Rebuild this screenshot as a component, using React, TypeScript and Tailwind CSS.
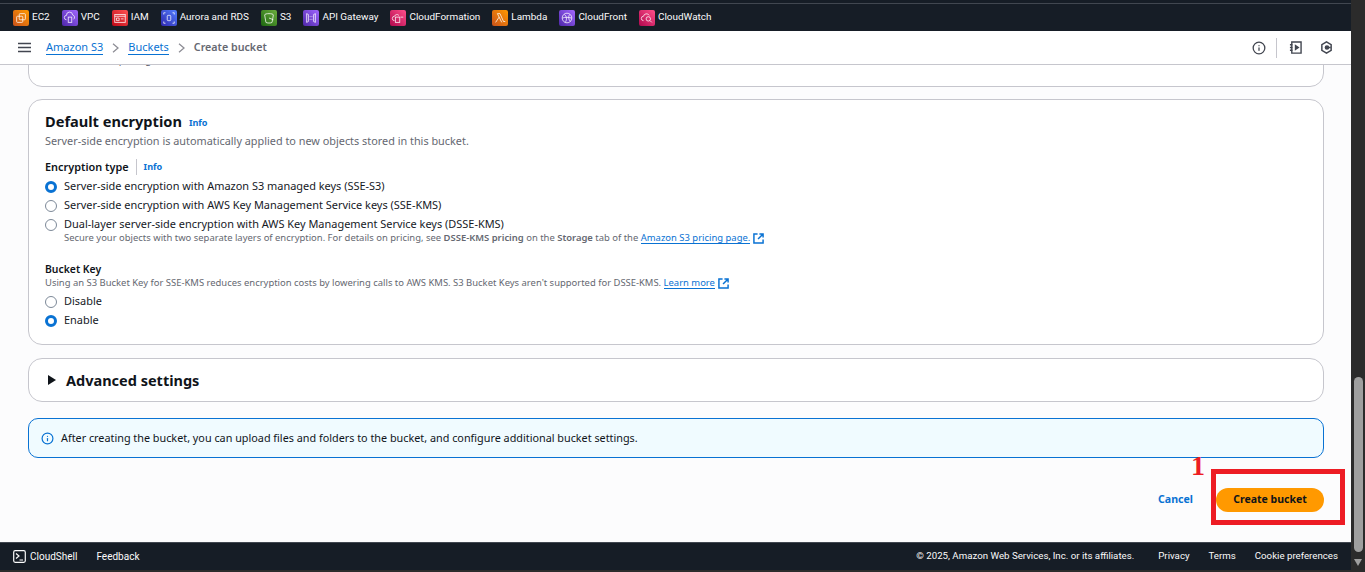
import { Info as InfoIcon } from 'lucide-react'

const sans = "font-['Noto_Sans',sans-serif]"
const bar = "font-['Roboto',sans-serif]"

function Svc({ from, to, label, children }: { from: string; to: string; label: string; children: React.ReactNode }) {
  return (
    <div className="flex items-center gap-[3px]">
      <span
        className="flex h-4 w-4 items-center justify-center rounded-[2px]"
        style={{ background: `linear-gradient(to top right, ${from}, ${to})` }}
      >
        <svg viewBox="0 0 16 16" className="h-[14px] w-[14px]" fill="none" stroke="#fff" strokeWidth="1" strokeOpacity="0.85">
          {children}
        </svg>
      </span>
      <span className={`pb-[2px] text-[9.93px] leading-none text-[#fbfbfb] ${bar}`}>{label}</span>
    </div>
  )
}

function Radio({ checked, children }: { checked?: boolean; children: React.ReactNode }) {
  return (
    <div className="flex h-[19px] items-center gap-[7px]">
      {checked ? (
        <span className="h-3 w-3 shrink-0 rounded-full border-[3.5px] border-[#0972d3] bg-white" />
      ) : (
        <span className="h-3 w-3 shrink-0 rounded-full border border-[#7d8998] bg-white" />
      )}
      <span className="text-[10.95px] leading-none text-[#16191f]">{children}</span>
    </div>
  )
}

function ExtLink({ children }: { children: React.ReactNode }) {
  return (
    <span className="inline-flex items-center gap-[3px] text-[#0972d3]">
      <span className="border-b border-[#0972d3] leading-[11px]">{children}</span>
      <svg viewBox="0 0 12 12" className="h-[11px] w-[11px]" fill="none" stroke="#0972d3" strokeWidth="1.6">
        <path d="M5 1H1v10h10V7" />
        <path d="M7 1h4v4M11 1 5.5 6.5" />
      </svg>
    </span>
  )
}

export default function App() {
  return (
    <div className={`flex h-[572px] w-[1365px] overflow-hidden bg-[#2b2b2b] ${sans}`}>
      <div className="flex w-[1351px] flex-col">
        <div className="h-[3px] bg-[#161d26]" />
        <div className="flex h-[28px] items-center gap-[12px] border-t border-[#414750] bg-[#161d26] pl-[13px]">
          <Svc from="#c8511b" to="#ff9900" label="EC2">
            <rect x="6" y="3" width="7" height="7" rx="1" />
            <rect x="3" y="6" width="7" height="7" rx="1" />
          </Svc>
          <Svc from="#4d27a8" to="#a166ff" label="VPC">
            <path d="M4 10a2.500 2.500 0 0 1 0-5 3.500 3.500 0 0 1 7-.5 2.800 2.800 0 0 1 1 5" />
            <rect x="6" y="7" width="4" height="6" />
          </Svc>
          <Svc from="#bd0816" to="#ff5252" label="IAM">
            <rect x="2" y="4" width="12" height="9" />
            <path d="M2 6h12M4 8h3v3H4zM9 9h3" />
          </Svc>
          <Svc from="#2e27ad" to="#527fff" label="Aurora and RDS">
            <rect x="6" y="5" width="4" height="6" rx="1" />
            <path d="M2 2h2M2 2v2M14 2h-2M14 2v2M2 14h2M2 14v-2M14 14h-2M14 14v-2" />
          </Svc>
          <Svc from="#1b660f" to="#6cae3e" label="S3">
            <path d="M3 4.500c0-2 10-2 10 0l-1.500 8.500c-.5 1-6.500 1-7 0z" />
            <path d="M8 8l5 2" />
          </Svc>
          <Svc from="#4d27a8" to="#a166ff" label="API Gateway">
            <path d="M3 3v10l2-1V4zM13 3v10l-2-1V4z" />
            <path d="M7 6v1M9 6v1M7 9v1M9 9v1" />
          </Svc>
          <Svc from="#b0084d" to="#ff4f8b" label="CloudFormation">
            <path d="M9 5a3 3 0 0 0-5 1 2.500 2.500 0 0 0 0 5" />
            <rect x="5" y="7" width="5" height="6" />
            <path d="M11 7h3" />
          </Svc>
          <Svc from="#c8511b" to="#ff9900" label="Lambda">
            <path d="M3 13l4-6-2-4h3l4 9h2M7 7l3 6" />
          </Svc>
          <Svc from="#4d27a8" to="#a166ff" label="CloudFront">
            <circle cx="8" cy="8" r="5.500" />
            <path d="M5 4c3 2 3 6 1 9M11 4c-2 3-1 6 1 8M3 8c3-1 6-1 10 0" />
          </Svc>
          <Svc from="#b0084d" to="#ff4f8b" label="CloudWatch">
            <path d="M4 11a2.500 2.500 0 0 1 0-5 3.500 3.500 0 0 1 6.500-1" />
            <circle cx="9.500" cy="9" r="2.500" />
            <path d="m11.500 11 2 2" />
          </Svc>
        </div>

        <div className="flex h-[34px] items-center border-b border-[#c6c6cd] bg-white pl-[18px] pr-[18px]">
          <svg viewBox="0 0 13 11" className="h-[11px] w-[13px]" fill="none" stroke="#424650" strokeWidth="1.700">
            <path d="M0 1.500h13M0 5.500h13M0 9.500h13" />
          </svg>
          <span className="ml-[15px] border-b border-[#0972d3] text-[11px] leading-[14px] text-[#0972d3]">Amazon S3</span>
          <svg viewBox="0 0 8 12" className="mx-[9px] h-[10px] w-[7px]" fill="none" stroke="#8c8c94" strokeWidth="1.500">
            <path d="m1 1 6 5-6 5" />
          </svg>
          <span className="border-b border-[#0972d3] text-[11px] leading-[14px] text-[#0972d3]">Buckets</span>
          <svg viewBox="0 0 8 12" className="mx-[9px] h-[10px] w-[7px]" fill="none" stroke="#8c8c94" strokeWidth="1.500">
            <path d="m1 1 6 5-6 5" />
          </svg>
          <span className="text-[10.7px] font-semibold text-[#656871]">Create bucket</span>
          <div className="ml-auto flex items-center">
            <InfoIcon className="h-[14px] w-[14px] text-[#424650]" strokeWidth={2.200} />
            <span className="ml-[10px] mr-[12px] h-5 w-px bg-[#c6c6cd]" />
            <svg viewBox="0 0 14 14" className="h-[13px] w-[13px]" fill="none" stroke="#424650" strokeWidth="1.500">
              <path d="M3 1h10v12H3zM1 4h3M1 7h3M1 10h3" />
              <path d="m7 5 3 2-3 2z" fill="#424650" />
            </svg>
            <svg viewBox="0 0 14 14" className="ml-[18px] h-[13px] w-[13px]" fill="none" stroke="#424650" strokeWidth="1.600">
              <path d="M7 1l5 3v6l-5 3-5-3V4z" />
              <circle cx="7.500" cy="7" r="1.700" fill="#424650" />
              <path d="M7.500 7h4" />
            </svg>
          </div>
        </div>

        <div className="flex min-h-0 flex-1 flex-col bg-[#fcfcfd] pl-[28px] pr-[27px]">
          <div className="h-[22px] shrink-0 overflow-hidden">
            <div className="-mt-[40px] h-[62px] rounded-b-[14px] border border-[#c6c6cd] bg-white px-4 pt-[24px] text-[10px] leading-[18px] text-[#656871]">
              Recommended pricing
            </div>
          </div>

          <div className="mt-[12px] h-[246px] shrink-0 rounded-[14px] border border-[#c6c6cd] bg-white px-4 pt-[11px]">
            <div className="flex items-center gap-[7px]">
              <h2 className="text-[14.6px] font-bold leading-[20px] text-[#0f141a]">Default encryption</h2>
              <span className="pt-[3px] text-[9.1px] font-bold text-[#0972d3]">Info</span>
            </div>
            <p className="mt-[2px] text-[10.87px] leading-[16px] text-[#656871]">
              Server-side encryption is automatically applied to new objects stored in this bucket.
            </p>
            <div className="mt-[10px] flex h-4 items-center">
              <span className="text-[10.9px] font-semibold text-[#0f141a]">Encryption type</span>
              <span className="mx-[7px] h-4 w-px bg-[#c6c6cd]" />
              <span className="text-[9.1px] font-bold text-[#0972d3]">Info</span>
            </div>
            <div className="mt-[2px]">
              <Radio checked>Server-side encryption with Amazon S3 managed keys (SSE-S3)</Radio>
              <Radio>Server-side encryption with AWS Key Management Service keys (SSE-KMS)</Radio>
              <Radio>Dual-layer server-side encryption with AWS Key Management Service keys (DSSE-KMS)</Radio>
            </div>
            <div className="-mt-[3px] pl-[19px] text-[9.45px] leading-[13px] text-[#656871]">
              Secure your objects with two separate layers of encryption. For details on pricing, see{' '}
              <b className="font-semibold">DSSE-KMS pricing</b> on the <b className="font-semibold">Storage</b> tab of the{' '}
              <ExtLink>Amazon S3 pricing page.</ExtLink>
            </div>

            <div className="mt-[18px] text-[10.4px] font-semibold leading-[14px] text-[#0f141a]">Bucket Key</div>
            <div className="text-[9.45px] leading-[13px] text-[#656871]">
              Using an S3 Bucket Key for SSE-KMS reduces encryption costs by lowering calls to AWS KMS. S3 Bucket Keys aren't
              supported for DSSE-KMS. <ExtLink>Learn more</ExtLink>
            </div>
            <div className="mt-[3px]">
              <Radio>Disable</Radio>
              <Radio checked>Enable</Radio>
            </div>
          </div>

          <div className="mt-[13px] flex h-[44px] shrink-0 items-center gap-[10px] rounded-[14px] border border-[#c6c6cd] bg-white pl-[19px]">
            <svg viewBox="0 0 8 10" className="h-[10px] w-[8px]" fill="#0f141a">
              <path d="M0 0l8 5-8 5z" />
            </svg>
            <h2 className="pt-[2px] text-[14.5px] font-bold text-[#0f141a]">Advanced settings</h2>
          </div>

          <div className="mt-[16px] flex h-[40px] shrink-0 items-center gap-[7px] rounded-[10px] border border-[#0972d3] bg-[#f0fbff] pl-[12px]">
            <InfoIcon className="h-[13px] w-[13px] text-[#0972d3]" strokeWidth={2.200} />
            <span className="text-[10.82px] text-[#0f141a]">
              After creating the bucket, you can upload files and folders to the bucket, and configure additional bucket settings.
            </span>
          </div>

          <div className="mt-[29px] flex items-center justify-end pt-[1px]">
            <span className="text-[10.6px] font-bold text-[#0972d3]">Cancel</span>
            <button className="ml-[23px] h-6 w-[108px] rounded-full bg-[#ff9900] text-[10.5px] font-bold text-[#0f141a]">
              Create bucket
            </button>
          </div>
        </div>

        <div className={`flex h-[30px] items-center border-t border-[#414750] border-b-[2px] border-b-[#2b2b2b] bg-[#161d26] pb-[1px] pl-[13px] pr-[13px] text-[10px] text-[#fbfbfb] ${bar}`}>
          <svg viewBox="0 0 13 13" className="h-[13px] w-[13px]" fill="none" stroke="#fbfbfb" strokeWidth="1.200">
            <rect x="0.700" y="0.700" width="11.600" height="11.600" rx="1.500" />
            <path d="m3 3.500 3 2.500-3 2.500M6.500 10H10" />
          </svg>
          <span className="ml-[4px]">CloudShell</span>
          <span className="ml-[19px]">Feedback</span>
          <div className="ml-auto flex text-[9.7px]">
            <span>© 2025, Amazon Web Services, Inc. or its affiliates.</span>
            <span className="ml-[24px]">Privacy</span>
            <span className="ml-[19px]">Terms</span>
            <span className="ml-[19px]">Cookie preferences</span>
          </div>
        </div>
      </div>

      <div className="flex w-[14px] flex-col items-center bg-[#2b2b2b]">
        <div className="mt-[377px] h-[175px] w-[9px] rounded-full bg-[#9f9f9f]" />
        <div className="mt-[7px] h-0 w-0 border-x-[4.5px] border-t-[7px] border-x-transparent border-t-[#9f9f9f]" />
      </div>

      <span className="absolute left-[1191px] top-[449px] font-['Liberation_Serif',serif] text-[28px] font-bold leading-[34px] text-[#ed1c24]">
        1
      </span>
      <div className="absolute left-[1211px] top-[469px] h-[56px] w-[134px] border-[5px] border-[#ed1c24]" />
    </div>
  )
}
